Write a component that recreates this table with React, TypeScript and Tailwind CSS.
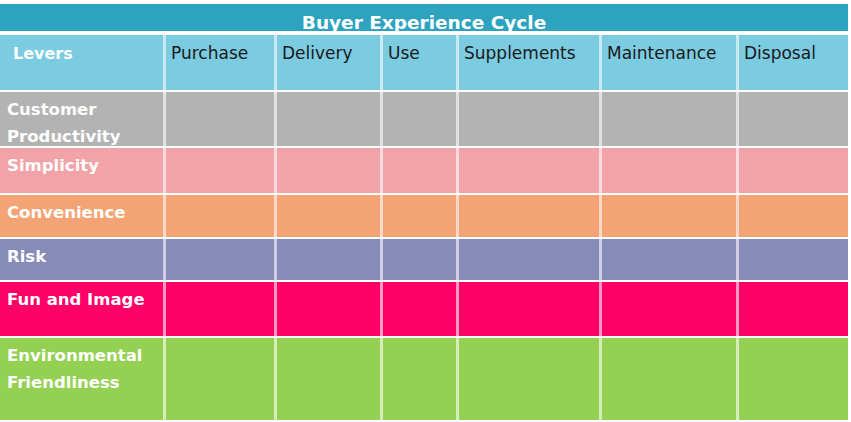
const columns = ["Purchase", "Delivery", "Use", "Supplements", "Maintenance", "Disposal"];

const rows = [
  { label: ["Customer", "Productivity"], bg: "bg-[#b3b3b3]", h: "h-[54px]" },
  { label: ["Simplicity"], bg: "bg-[#f2a3a8]", h: "h-[45px]" },
  { label: ["Convenience"], bg: "bg-[#f3a374]", h: "h-[42px]" },
  { label: ["Risk"], bg: "bg-[#878bb8]", h: "h-[41px]" },
  { label: ["Fun and Image"], bg: "bg-[#ff0066]", h: "h-[54px]" },
  { label: ["Environmental", "Friendliness"], bg: "bg-[#94d153]", h: "h-[82px]" },
];

const grid = "grid grid-cols-[163px_111px_106px_76px_143px_137px_112px]";

export default function App() {
  return (
    <div className="h-[422px] w-[851px] bg-white pt-[4px] font-['DejaVu_Sans',sans-serif]">
      <div className="flex w-[848px] flex-col gap-y-[2px]">
        <div className="mb-[2px] flex h-[27px] items-end justify-center bg-[#2da3bf]">
          <span className="text-[18.5px] font-bold leading-[16px] text-white">
            Buyer Experience Cycle
          </span>
        </div>

        <div className={`${grid} h-[55px] bg-[#7bcbe1]`}>
          <div className="pl-[13px] pt-[5px] text-[16px] font-bold leading-[27px] text-white">
            Levers
          </div>
          {columns.map((c) => (
            <div
              key={c}
              className="border-l-[3px] border-white/60 pl-[5px] pt-[5px] text-[17px] leading-[27px] text-[#1a1a1a]"
            >
              {c}
            </div>
          ))}
        </div>

        {rows.map((r) => (
          <div key={r.label.join(" ")} className={`${grid} ${r.h} ${r.bg}`}>
            <div className="pl-[7px] pt-[4px] text-[16.5px] font-bold leading-[27px] text-white">
              {r.label.map((l) => (
                <div key={l}>{l}</div>
              ))}
            </div>
            {columns.map((c) => (
              <div key={c} className="border-l-[3px] border-white/60" />
            ))}
          </div>
        ))}
      </div>
    </div>
  );
}
